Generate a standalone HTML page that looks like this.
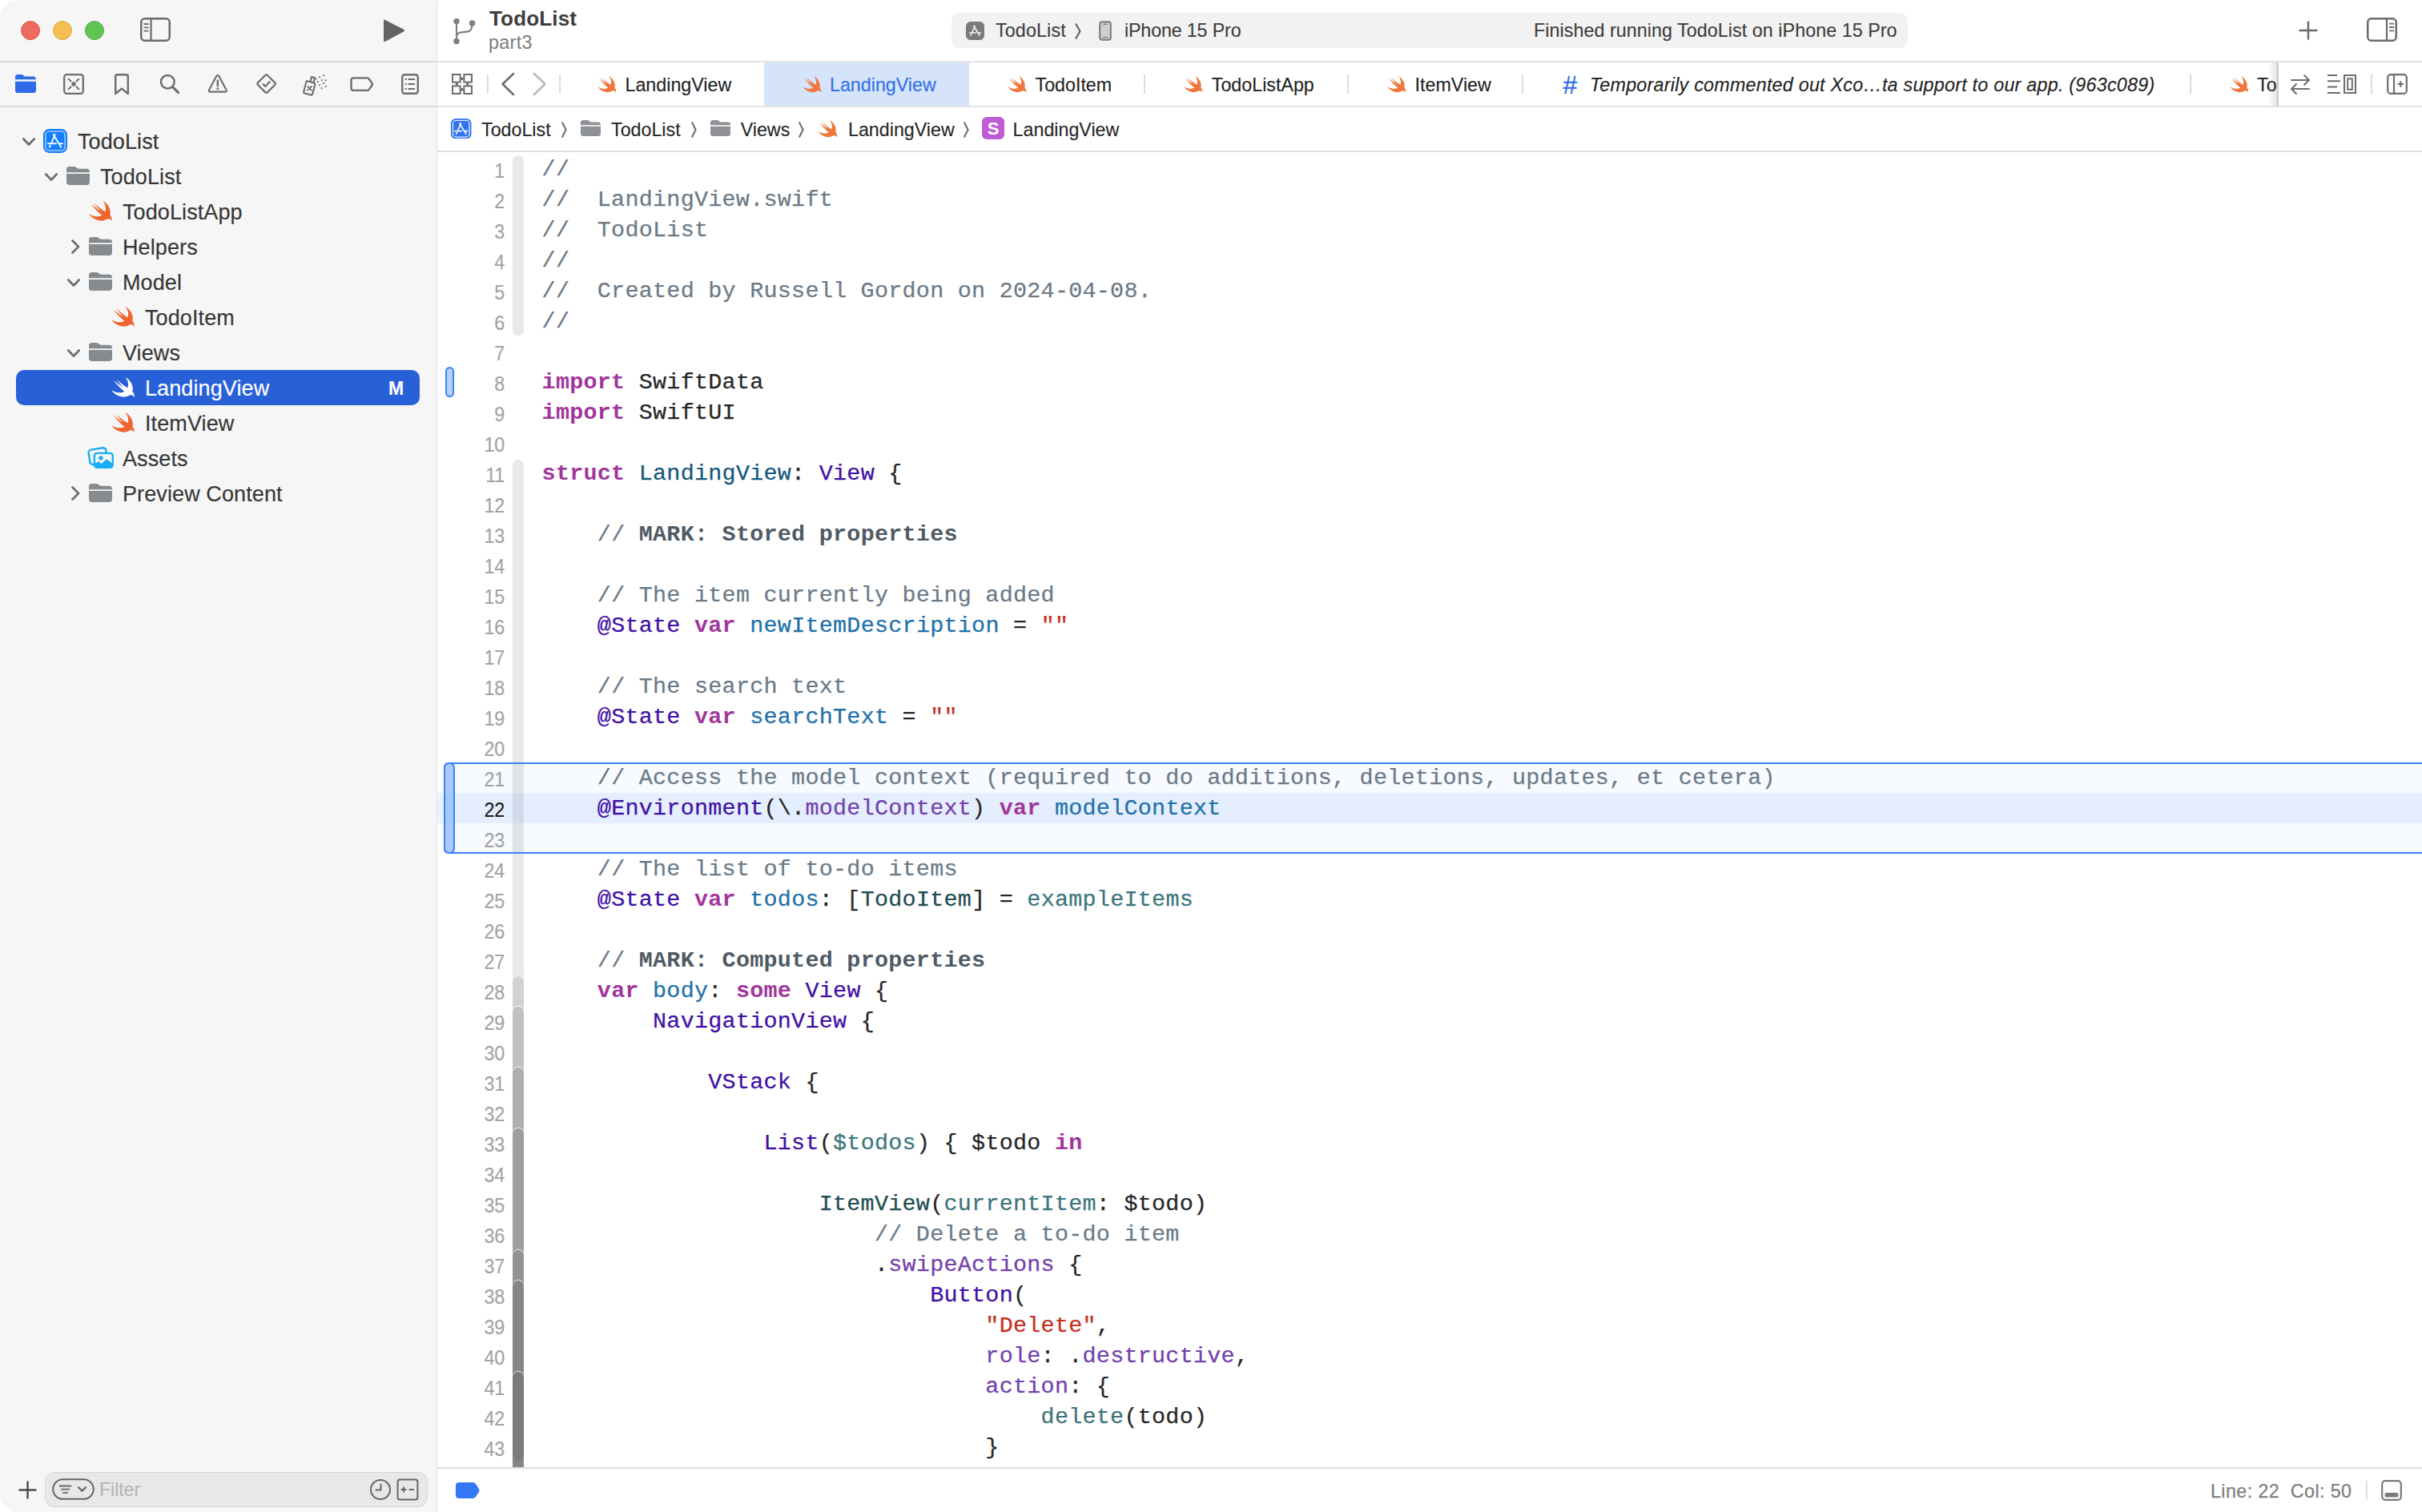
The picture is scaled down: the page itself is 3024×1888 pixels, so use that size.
<!DOCTYPE html>
<html><head><meta charset="utf-8"><title>TodoList — LandingView.swift</title>
<style>
*{box-sizing:border-box;margin:0;padding:0}
html,body{width:3024px;height:1888px;background:#fff;overflow:hidden}
body{font-family:"Liberation Sans",sans-serif;color:#333;position:relative}
.a{position:absolute;display:block}
.t{position:absolute;white-space:pre;line-height:1}
#side{position:absolute;left:0;top:0;width:546px;height:1888px;background:#f6f6f6;border-radius:21px 0 0 21px;box-shadow:inset 0 1px 0 #fbfbfb;border-right:1px solid #e2e2e2}
.hl{position:absolute;height:2px;background:#dedede}
.row{position:absolute;left:0;width:544px;height:44px}
.rt{position:absolute;top:0;height:44px;line-height:47px;font-size:27px;letter-spacing:.1px;-webkit-text-stroke:.15px;color:#363636;white-space:pre}
.tab{position:absolute;top:78px;height:54px;line-height:56px;font-size:23.25px;letter-spacing:0;-webkit-text-stroke:.12px;color:#222;white-space:pre}
.jb{position:absolute;top:134px;height:54px;line-height:57px;font-size:23.25px;letter-spacing:0;-webkit-text-stroke:.12px;color:#262626;white-space:pre}
.sep{position:absolute;width:2px;background:#dcdcdc}
#code{position:absolute;left:546px;top:190px;width:2478px;height:1642px;overflow:hidden;background:#fff}
.ln{position:absolute;left:0;width:84.3px;height:38px;line-height:40px;text-align:right;font-family:"Liberation Sans",sans-serif;font-size:26.6px;color:#a3a3a3;letter-spacing:0;-webkit-text-stroke:.2px;transform:scaleX(.875);transform-origin:100% 50%}
.cl{position:absolute;left:130.6px;height:38px;line-height:38.8px;font-family:"Liberation Mono",monospace;font-size:28.4px;letter-spacing:.268px;-webkit-text-stroke:.25px;white-space:pre;color:#262626}
.c{color:#6b7a87}.k{color:#a2359c;font-weight:bold;-webkit-text-stroke:0}.m{color:#4f5a65;font-weight:bold;-webkit-text-stroke:0}
.s{color:#c5301f}.td{color:#15577f}.od{color:#2071a9}.oc{color:#4010a4}.op{color:#7340ad}.pc{color:#214c50}.pf{color:#3d757c}
</style></head><body>
<div id="side"></div><div class="hl" style="left:0;top:76px;width:545px;background:#d9d9d9"></div><div class="hl" style="left:0;top:132px;width:545px;background:#d9d9d9"></div><div class="hl" style="left:546px;top:76px;width:2478px;background:#e3e3e3"></div><div class="hl" style="left:546px;top:132px;width:2478px;background:#e3e3e3"></div><div class="hl" style="left:546px;top:188px;width:2478px"></div><div class="hl" style="left:546px;top:1832px;width:2478px"></div><div class="a" style="left:26px;top:26px;width:24px;height:24px;border-radius:50%;background:#ed6a5f;border:1px solid #d8584d"></div><div class="a" style="left:66px;top:26px;width:24px;height:24px;border-radius:50%;background:#f5be4f;border:1px solid #dca93f"></div><div class="a" style="left:106px;top:26px;width:24px;height:24px;border-radius:50%;background:#61c554;border:1px solid #51ad45"></div><svg class="a" style="left:174px;top:21px" width="40" height="32" viewBox="0 0 40 32"><g fill="none" stroke="#6b6b6b" stroke-width="2.5"><rect x="2.25" y="2.25" width="35.5" height="27.5" rx="4.5"/><path d="M14.5 2.5V29.5" stroke-width="2.2"/></g><g stroke="#6b6b6b" stroke-width="1.8" stroke-linecap="round"><path d="M6.3 9H10.8M6.3 13.3H10.8M6.3 17.6H10.8"/></g></svg><svg class="a" style="left:475px;top:21.6px" width="34" height="33" viewBox="0 0 34 36" preserveAspectRatio="none"><path d="M4 4.5Q4 2 6.2 3.2L29 16.2Q31 17.6 29 19L6.2 32.4Q4 33.6 4 31Z" fill="#636363"/></svg><svg class="a" style="left:19px;top:93px" width="26" height="23" viewBox="0 0 27 23" preserveAspectRatio="none"><path fill="#2f6be6" d="M0 3.4Q0 0 3.4 0H7.8Q9.4 0 10.5 1.1L11.2 1.8Q11.9 2.5 13 2.5H23.4Q26.6 2.5 26.8 5.6V6.3H0Z"/><path fill="#2f6be6" d="M0 8.7H27V19.4Q27 23 23.4 23H3.6Q0 23 0 19.4Z"/></svg><svg class="a" style="left:78px;top:91px" width="28" height="28" viewBox="0 0 28 28"><g fill="none" stroke="#6e6e6e" stroke-width="2.3" stroke-linecap="round"><rect x="2.2" y="2.2" width="23.6" height="23.6" rx="3"/><path d="M7.7 7.7L10.6 10.6M20.3 7.7L17.4 10.6M7.7 20.3L10.6 17.4M20.3 20.3L17.4 17.4" stroke-width="2"/></g><circle cx="14" cy="14" r="2.7" fill="#6e6e6e"/></svg><svg class="a" style="left:141px;top:91px" width="22" height="29" viewBox="0 0 22 29"><path d="M3.2 4.4Q3.2 2.3 5.3 2.3H16.7Q18.8 2.3 18.8 4.4V26L11 19.6L3.2 26Z" fill="none" stroke="#6e6e6e" stroke-width="2.4" stroke-linejoin="round"/></svg><svg class="a" style="left:198px;top:91px" width="28" height="28" viewBox="0 0 28 28"><g fill="none" stroke="#6e6e6e" stroke-width="2.5" stroke-linecap="round"><circle cx="11.3" cy="11.3" r="8.3"/><path d="M17.6 17.6L24.6 24.6" stroke-width="3"/></g></svg><svg class="a" style="left:259.3px;top:91.6px" width="25.6" height="25.6" viewBox="0 0 28 27" preserveAspectRatio="none"><path d="M12.3 3.3Q14 0.6 15.7 3.3L25.8 21.3Q27 23.8 24.3 23.8H3.7Q1 23.8 2.2 21.3Z" fill="none" stroke="#6e6e6e" stroke-width="2.3" stroke-linejoin="round"/><path d="M14 9.3V16" stroke="#6e6e6e" stroke-width="2.6" stroke-linecap="round"/><circle cx="14" cy="19.8" r="1.6" fill="#6e6e6e"/></svg><svg class="a" style="left:318.5px;top:91.4px" width="27.2" height="27.2" viewBox="0 0 30 30"><g fill="none" stroke="#6e6e6e" stroke-width="2.4" stroke-linejoin="round" stroke-linecap="round"><path d="M13.4 3.4Q15 1.8 16.6 3.4L26.6 13.4Q28.2 15 26.6 16.6L16.6 26.6Q15 28.2 13.4 26.6L3.4 16.6Q1.8 15 3.4 13.4Z"/><path d="M10.6 15.6L13.8 18.6L19.6 12.2"/></g></svg><svg class="a" style="left:376.5px;top:90.5px" width="34" height="30" viewBox="0 0 34 30"><g fill="none" stroke="#6e6e6e" stroke-width="2.1" stroke-linejoin="round" stroke-linecap="round"><path d="M6.6 10.2L14.8 12.4Q16.6 13 16.2 14.8L13.2 26.2Q12.6 28 10.8 27.6L3.6 25.6Q1.8 25 2.3 23.2L5.2 11.8Q5.6 10 6.6 10.2Z"/><path d="M10.6 10.8L11.9 5L15.9 6L14.6 12"/><path d="M7.2 16.8L11.8 21.6M11.9 17L7 21.6" stroke-width="1.8"/></g><g fill="#6e6e6e"><rect x="26.2" y="2.2" width="1.9" height="1.9"/><rect x="21.1" y="4.2" width="1.9" height="1.9"/><rect x="16.5" y="6.3" width="1.9" height="1.9"/><rect x="23.9" y="8.2" width="1.9" height="1.9"/><rect x="28.8" y="8.4" width="1.9" height="1.9"/><rect x="18.8" y="10" width="1.9" height="1.9"/><rect x="26.2" y="12" width="1.9" height="1.9"/><rect x="21.1" y="14.2" width="1.9" height="1.9"/><rect x="28.8" y="16" width="1.9" height="1.9"/><rect x="23.7" y="18.2" width="1.9" height="1.9"/></g></svg><svg class="a" style="left:436.8px;top:95.8px" width="29.4" height="18.4" viewBox="0 0 31 20" preserveAspectRatio="none"><path d="M4.4 1.6H22.4Q24.2 1.6 25.2 3L29 8.6Q29.8 10 29 11.4L25.2 17Q24.2 18.4 22.4 18.4H4.4Q1.6 18.4 1.6 15.6V4.4Q1.6 1.6 4.4 1.6Z" fill="none" stroke="#6e6e6e" stroke-width="2.5" stroke-linejoin="round"/></svg><svg class="a" style="left:500px;top:91px" width="24" height="28" viewBox="0 0 24 28"><rect x="2.2" y="2.2" width="19.6" height="23.6" rx="3" fill="none" stroke="#6e6e6e" stroke-width="2.4"/><g stroke="#6e6e6e" stroke-width="2" ><path d="M9.4 8H18M9.4 14H18M9.4 20H18"/><path d="M5.6 8H7.6M5.6 14H7.6M5.6 20H7.6"/></g></svg><svg class="a" style="left:26px;top:170px" width="20" height="14" viewBox="0 0 20 14"><path d="M3.3 3.6L10 10.5L16.7 3.6" fill="none" stroke="#6e6e6e" stroke-width="2.8" stroke-linecap="round" stroke-linejoin="round"/></svg><svg class="a" style="left:54px;top:161px" width="30" height="30" viewBox="0 0 30 30"><rect x="0" y="0" width="30" height="30" rx="7.4" fill="#167efb"/><rect x="2.9" y="2.9" width="24.2" height="24.2" rx="4.6" fill="none" stroke="#a4ccfd" stroke-width="1.5"/><g stroke="#fff" stroke-width="2" stroke-linecap="round" fill="none" opacity=".93"><path d="M14.6 6.9L10.3 17.4"/><path d="M12.7 7.2L22.2 22.6"/><path d="M6 18.3H16"/><path d="M20.3 18.3H24.1"/><path d="M8.9 20.6L7.9 22.6"/></g></svg><div class="rt" style="left:97px;top:154px;">TodoList</div><svg class="a" style="left:54px;top:214px" width="20" height="14" viewBox="0 0 20 14"><path d="M3.3 3.6L10 10.5L16.7 3.6" fill="none" stroke="#6e6e6e" stroke-width="2.8" stroke-linecap="round" stroke-linejoin="round"/></svg><svg class="a" style="left:83px;top:208px" width="29" height="23" viewBox="0 0 25 20" preserveAspectRatio="none"><path fill="#868b90" d="M0 3.2Q0 0 3.2 0H8.2Q9.6 0 10.6 1L11.4 1.8Q12 2.4 13 2.4H21.8Q25 2.4 25 5.6V6.2H0Z"/><path fill="#868b90" d="M0 7.8H25V16.8Q25 20 21.8 20H3.2Q0 20 0 16.8Z"/></svg><div class="rt" style="left:125px;top:198px;">TodoList</div><svg class="a" style="left:111px;top:251px" width="29" height="25" viewBox="2.4 3.4 18.3 16.4" preserveAspectRatio="none"><path fill="#f0652f" d="M13.543 3.41c4.114 2.47 6.545 7.162 5.549 11.131-.024.093-.05.181-.076.272l.002.001c2.062 2.538 1.5 5.258 1.236 4.745-1.072-2.086-3.066-1.568-4.088-1.043a6.803 6.803 0 0 1-.281.158l-.02.012-.002.002c-2.115 1.123-4.957 1.205-7.812-.022a12.568 12.568 0 0 1-5.64-4.838c.649.48 1.35.902 2.097 1.252 3.019 1.414 6.051 1.311 8.197-.002C9.651 12.73 7.101 9.67 5.146 7.191a10.628 10.628 0 0 1-1.005-1.384c2.34 2.142 6.038 4.83 7.365 5.576C8.69 8.408 6.208 4.743 6.324 4.86c4.436 4.47 8.528 6.996 8.528 6.996.154.085.27.154.36.213.085-.215.16-.437.224-.668.708-2.588-.09-5.548-1.893-7.992z"/></svg><div class="rt" style="left:153px;top:242px;">TodoListApp</div><svg class="a" style="left:87px;top:298px" width="14" height="20" viewBox="0 0 14 20"><path d="M3.5 2.5L11 10L3.5 17.5" fill="none" stroke="#6e6e6e" stroke-width="2.8" stroke-linecap="round" stroke-linejoin="round"/></svg><svg class="a" style="left:111px;top:296px" width="29" height="23" viewBox="0 0 25 20" preserveAspectRatio="none"><path fill="#868b90" d="M0 3.2Q0 0 3.2 0H8.2Q9.6 0 10.6 1L11.4 1.8Q12 2.4 13 2.4H21.8Q25 2.4 25 5.6V6.2H0Z"/><path fill="#868b90" d="M0 7.8H25V16.8Q25 20 21.8 20H3.2Q0 20 0 16.8Z"/></svg><div class="rt" style="left:153px;top:286px;">Helpers</div><svg class="a" style="left:82px;top:346px" width="20" height="14" viewBox="0 0 20 14"><path d="M3.3 3.6L10 10.5L16.7 3.6" fill="none" stroke="#6e6e6e" stroke-width="2.8" stroke-linecap="round" stroke-linejoin="round"/></svg><svg class="a" style="left:111px;top:340px" width="29" height="23" viewBox="0 0 25 20" preserveAspectRatio="none"><path fill="#868b90" d="M0 3.2Q0 0 3.2 0H8.2Q9.6 0 10.6 1L11.4 1.8Q12 2.4 13 2.4H21.8Q25 2.4 25 5.6V6.2H0Z"/><path fill="#868b90" d="M0 7.8H25V16.8Q25 20 21.8 20H3.2Q0 20 0 16.8Z"/></svg><div class="rt" style="left:153px;top:330px;">Model</div><svg class="a" style="left:139px;top:383px" width="29" height="25" viewBox="2.4 3.4 18.3 16.4" preserveAspectRatio="none"><path fill="#f0652f" d="M13.543 3.41c4.114 2.47 6.545 7.162 5.549 11.131-.024.093-.05.181-.076.272l.002.001c2.062 2.538 1.5 5.258 1.236 4.745-1.072-2.086-3.066-1.568-4.088-1.043a6.803 6.803 0 0 1-.281.158l-.02.012-.002.002c-2.115 1.123-4.957 1.205-7.812-.022a12.568 12.568 0 0 1-5.64-4.838c.649.48 1.35.902 2.097 1.252 3.019 1.414 6.051 1.311 8.197-.002C9.651 12.73 7.101 9.67 5.146 7.191a10.628 10.628 0 0 1-1.005-1.384c2.34 2.142 6.038 4.83 7.365 5.576C8.69 8.408 6.208 4.743 6.324 4.86c4.436 4.47 8.528 6.996 8.528 6.996.154.085.27.154.36.213.085-.215.16-.437.224-.668.708-2.588-.09-5.548-1.893-7.992z"/></svg><div class="rt" style="left:181px;top:374px;">TodoItem</div><svg class="a" style="left:82px;top:434px" width="20" height="14" viewBox="0 0 20 14"><path d="M3.3 3.6L10 10.5L16.7 3.6" fill="none" stroke="#6e6e6e" stroke-width="2.8" stroke-linecap="round" stroke-linejoin="round"/></svg><svg class="a" style="left:111px;top:428px" width="29" height="23" viewBox="0 0 25 20" preserveAspectRatio="none"><path fill="#868b90" d="M0 3.2Q0 0 3.2 0H8.2Q9.6 0 10.6 1L11.4 1.8Q12 2.4 13 2.4H21.8Q25 2.4 25 5.6V6.2H0Z"/><path fill="#868b90" d="M0 7.8H25V16.8Q25 20 21.8 20H3.2Q0 20 0 16.8Z"/></svg><div class="rt" style="left:153px;top:418px;">Views</div><div class="a" style="left:20px;top:462px;width:504px;height:44px;border-radius:10px;background:#2860d8"></div><svg class="a" style="left:139px;top:471px" width="29" height="25" viewBox="2.4 3.4 18.3 16.4" preserveAspectRatio="none"><path fill="#fff" d="M13.543 3.41c4.114 2.47 6.545 7.162 5.549 11.131-.024.093-.05.181-.076.272l.002.001c2.062 2.538 1.5 5.258 1.236 4.745-1.072-2.086-3.066-1.568-4.088-1.043a6.803 6.803 0 0 1-.281.158l-.02.012-.002.002c-2.115 1.123-4.957 1.205-7.812-.022a12.568 12.568 0 0 1-5.64-4.838c.649.48 1.35.902 2.097 1.252 3.019 1.414 6.051 1.311 8.197-.002C9.651 12.73 7.101 9.67 5.146 7.191a10.628 10.628 0 0 1-1.005-1.384c2.34 2.142 6.038 4.83 7.365 5.576C8.69 8.408 6.208 4.743 6.324 4.86c4.436 4.47 8.528 6.996 8.528 6.996.154.085.27.154.36.213.085-.215.16-.437.224-.668.708-2.588-.09-5.548-1.893-7.992z"/></svg><div class="rt" style="left:181px;top:462px;color:#fff;">LandingView</div><div class="rt" style="left:485px;top:462px;color:#fff;font-weight:bold;font-size:23px;letter-spacing:0">M</div><svg class="a" style="left:139px;top:515px" width="29" height="25" viewBox="2.4 3.4 18.3 16.4" preserveAspectRatio="none"><path fill="#f0652f" d="M13.543 3.41c4.114 2.47 6.545 7.162 5.549 11.131-.024.093-.05.181-.076.272l.002.001c2.062 2.538 1.5 5.258 1.236 4.745-1.072-2.086-3.066-1.568-4.088-1.043a6.803 6.803 0 0 1-.281.158l-.02.012-.002.002c-2.115 1.123-4.957 1.205-7.812-.022a12.568 12.568 0 0 1-5.64-4.838c.649.48 1.35.902 2.097 1.252 3.019 1.414 6.051 1.311 8.197-.002C9.651 12.73 7.101 9.67 5.146 7.191a10.628 10.628 0 0 1-1.005-1.384c2.34 2.142 6.038 4.83 7.365 5.576C8.69 8.408 6.208 4.743 6.324 4.86c4.436 4.47 8.528 6.996 8.528 6.996.154.085.27.154.36.213.085-.215.16-.437.224-.668.708-2.588-.09-5.548-1.893-7.992z"/></svg><div class="rt" style="left:181px;top:506px;">ItemView</div><svg class="a" style="left:107px;top:555px" width="36" height="32" viewBox="0 0 36 32"><rect x="4.3" y="5.3" width="22" height="18.6" rx="3.6" transform="rotate(-9 15.3 14.6)" fill="none" stroke="#1badf8" stroke-width="2.4"/><rect x="10.9" y="10.9" width="22.9" height="17.9" rx="3.4" fill="#f6f6f6" stroke="#1badf8" stroke-width="2.4"/><circle cx="18.9" cy="17" r="2.8" fill="#1badf8"/><path d="M10.9 24.6L15.2 21.6Q16.2 21 17.2 21.7L19.6 24L24.6 19.4Q26.3 18.2 28 19.4L33.8 24V25.4Q33.8 28.8 30.4 28.8H14.3Q10.9 28.8 10.9 25.4Z" fill="#1badf8"/></svg><div class="rt" style="left:153px;top:550px;">Assets</div><svg class="a" style="left:87px;top:606px" width="14" height="20" viewBox="0 0 14 20"><path d="M3.5 2.5L11 10L3.5 17.5" fill="none" stroke="#6e6e6e" stroke-width="2.8" stroke-linecap="round" stroke-linejoin="round"/></svg><svg class="a" style="left:111px;top:604px" width="29" height="23" viewBox="0 0 25 20" preserveAspectRatio="none"><path fill="#868b90" d="M0 3.2Q0 0 3.2 0H8.2Q9.6 0 10.6 1L11.4 1.8Q12 2.4 13 2.4H21.8Q25 2.4 25 5.6V6.2H0Z"/><path fill="#868b90" d="M0 7.8H25V16.8Q25 20 21.8 20H3.2Q0 20 0 16.8Z"/></svg><div class="rt" style="left:153px;top:594px;">Preview Content</div><svg class="a" style="left:23px;top:1849px" width="23" height="23" viewBox="0 0 23 23"><path d="M11.5 1.5V21.5M1.5 11.5H21.5" stroke="#4a4a4a" stroke-width="2.4" stroke-linecap="round"/></svg><div class="a" style="left:56px;top:1838px;width:478px;height:44px;border-radius:12px;background:#e8e8e8;border:1px solid #d6d6d6"></div><svg class="a" style="left:65px;top:1846px" width="53" height="27" viewBox="0 0 53 27"><rect x="1.2" y="1.2" width="50.6" height="24.6" rx="12.3" fill="none" stroke="#666" stroke-width="2"/><path d="M9.5 9.5H23.5M11.8 13.7H21.2M14 17.9H19" stroke="#666" stroke-width="1.8" stroke-linecap="round"/><path d="M33 11.2L37.5 15.6L42 11.2" fill="none" stroke="#666" stroke-width="2.2" stroke-linecap="round" stroke-linejoin="round"/></svg><div class="t" style="left:124px;top:1849px;font-size:23.25px;letter-spacing:-.1px;color:#b3b3b3">Filter</div><svg class="a" style="left:461px;top:1846px" width="28" height="28" viewBox="0 0 28 28"><circle cx="14" cy="14" r="12" fill="none" stroke="#666" stroke-width="2"/><path d="M14.5 7.5V14.5H8.5" fill="none" stroke="#666" stroke-width="2" stroke-linecap="round" stroke-linejoin="round"/></svg><svg class="a" style="left:495px;top:1846px" width="28" height="28" viewBox="0 0 28 28"><rect x="1.6" y="1.6" width="24.8" height="24.8" rx="2.6" fill="none" stroke="#666" stroke-width="2"/><path d="M5.6 14H12.4M9 10.6V17.4M15.8 14H22" stroke="#666" stroke-width="2" /></svg><svg class="a" style="left:563px;top:21px" width="32" height="36" viewBox="0 0 32 36"><g fill="none" stroke="#7e7e7e" stroke-width="2.1" stroke-linecap="round"><path d="M7 7V29"/><path d="M26 9.5V12Q26 18 20 18.6L13 19.4Q7 20.2 7 25"/></g><circle cx="7" cy="5.6" r="3.7" fill="#7e7e7e"/><circle cx="7" cy="30.4" r="3.7" fill="#7e7e7e"/><circle cx="26.6" cy="8" r="3.7" fill="#7e7e7e"/></svg><div class="t" style="left:611px;top:9.5px;font-size:26px;font-weight:bold;letter-spacing:.17px;color:#3d3d3d">TodoList</div><div class="t" style="left:610px;top:42px;font-size:23.25px;letter-spacing:.38px;color:#7d7d7d">part3</div><div class="a" style="left:1188px;top:16px;width:1194px;height:44px;border-radius:11px;background:#f2f2f2"></div><svg class="a" style="left:1206px;top:27px" width="23" height="23" viewBox="0 0 30 30"><rect x="0" y="0" width="30" height="30" rx="7.4" fill="#7a7a7a"/><g stroke="#fff" stroke-width="2" stroke-linecap="round" fill="none" opacity=".93"><path d="M14.6 6.9L10.3 17.4"/><path d="M12.7 7.2L22.2 22.6"/><path d="M6 18.3H16"/><path d="M20.3 18.3H24.1"/><path d="M8.9 20.6L7.9 22.6"/></g></svg><div class="t" style="left:1243px;top:27px;font-size:23.25px;letter-spacing:.15px;-webkit-text-stroke:.12px;color:#3c3c3c">TodoList</div><svg class="a" style="left:1341px;top:28px" width="10" height="22" viewBox="0 0 10 22"><path d="M2 1.5L7.5 11L2 20.5" fill="none" stroke="#5a5a5a" stroke-width="2"/></svg><svg class="a" style="left:1372px;top:26px" width="16" height="25" viewBox="0 0 16 25"><rect x="1.2" y="1.2" width="13.6" height="22.6" rx="3" fill="#cfcfcf" stroke="#7a7a7a" stroke-width="2"/><path d="M5.5 4.2H10.5M5 20.6H11" stroke="#7a7a7a" stroke-width="1.4"/></svg><div class="t" style="left:1404px;top:27px;font-size:23.25px;letter-spacing:-.15px;-webkit-text-stroke:.12px;color:#3c3c3c">iPhone 15 Pro</div><div class="t" style="left:1915px;top:27px;font-size:23.25px;letter-spacing:.07px;-webkit-text-stroke:.12px;color:#3c3c3c">Finished running TodoList on iPhone 15 Pro</div><svg class="a" style="left:2870px;top:26px" width="24" height="24" viewBox="0 0 24 24"><path d="M12 1.5V22.5M1.5 12H22.5" stroke="#6a6a6a" stroke-width="2.4" stroke-linecap="round"/></svg><svg class="a" style="left:2954px;top:21px" width="40" height="32" viewBox="0 0 40 32"><g fill="none" stroke="#6b6b6b" stroke-width="2.5"><rect x="2.25" y="2.25" width="35.5" height="27.5" rx="4.5"/><path d="M26 2.5V29.5" stroke-width="2.2"/></g><g stroke="#6b6b6b" stroke-width="1.8" stroke-linecap="round"><path d="M29.8 8.6H34.4M29.8 13H34.4M29.8 17.4H34.4"/></g></svg><svg class="a" style="left:563px;top:91px" width="28" height="28" viewBox="0 0 28 28"><g fill="none" stroke="#6e6e6e" stroke-width="2"><rect x="2" y="2" width="9.6" height="9.6"/><rect x="16.4" y="2" width="9.6" height="9.6"/><rect x="2" y="16.4" width="9.6" height="9.6"/><rect x="16.4" y="16.4" width="9.6" height="9.6"/><path d="M11.6 6.8H16.4M6.8 11.6V16.4M21.2 11.6V16.4M11.6 21.2H16.4M14 6.8V9M19 14H21.2M14 21.2V19M6.8 14H9"/></g></svg><div class="sep" style="left:608px;top:93px;height:24px"></div><svg class="a" style="left:624px;top:89px" width="20" height="32" viewBox="0 0 20 32"><path d="M17 3L3.5 16L17 29" fill="none" stroke="#6e6e6e" stroke-width="2.6" stroke-linecap="round" stroke-linejoin="round"/></svg><svg class="a" style="left:664px;top:89px" width="20" height="32" viewBox="0 0 20 32"><path d="M3 3L16.5 16L3 29" fill="none" stroke="#b9b9b9" stroke-width="2.6" stroke-linecap="round" stroke-linejoin="round"/></svg><div class="sep" style="left:698px;top:93px;height:24px"></div><div class="a" style="left:954px;top:78px;width:256px;height:54px;background:#d6e4fb"></div><svg class="a" style="left:746px;top:95px" width="23.5" height="20.5" viewBox="2.4 3.4 18.3 16.4" preserveAspectRatio="none"><path fill="#f0783f" d="M13.543 3.41c4.114 2.47 6.545 7.162 5.549 11.131-.024.093-.05.181-.076.272l.002.001c2.062 2.538 1.5 5.258 1.236 4.745-1.072-2.086-3.066-1.568-4.088-1.043a6.803 6.803 0 0 1-.281.158l-.02.012-.002.002c-2.115 1.123-4.957 1.205-7.812-.022a12.568 12.568 0 0 1-5.64-4.838c.649.48 1.35.902 2.097 1.252 3.019 1.414 6.051 1.311 8.197-.002C9.651 12.73 7.101 9.67 5.146 7.191a10.628 10.628 0 0 1-1.005-1.384c2.34 2.142 6.038 4.83 7.365 5.576C8.69 8.408 6.208 4.743 6.324 4.86c4.436 4.47 8.528 6.996 8.528 6.996.154.085.27.154.36.213.085-.215.16-.437.224-.668.708-2.588-.09-5.548-1.893-7.992z"/></svg><div class="tab" style="left:780.5px;color:#222">LandingView</div><svg class="a" style="left:1002px;top:95px" width="23.5" height="20.5" viewBox="2.4 3.4 18.3 16.4" preserveAspectRatio="none"><path fill="#f0783f" d="M13.543 3.41c4.114 2.47 6.545 7.162 5.549 11.131-.024.093-.05.181-.076.272l.002.001c2.062 2.538 1.5 5.258 1.236 4.745-1.072-2.086-3.066-1.568-4.088-1.043a6.803 6.803 0 0 1-.281.158l-.02.012-.002.002c-2.115 1.123-4.957 1.205-7.812-.022a12.568 12.568 0 0 1-5.64-4.838c.649.48 1.35.902 2.097 1.252 3.019 1.414 6.051 1.311 8.197-.002C9.651 12.73 7.101 9.67 5.146 7.191a10.628 10.628 0 0 1-1.005-1.384c2.34 2.142 6.038 4.83 7.365 5.576C8.69 8.408 6.208 4.743 6.324 4.86c4.436 4.47 8.528 6.996 8.528 6.996.154.085.27.154.36.213.085-.215.16-.437.224-.668.708-2.588-.09-5.548-1.893-7.992z"/></svg><div class="tab" style="left:1036px;color:#2f6fe4">LandingView</div><svg class="a" style="left:1258px;top:95px" width="23.5" height="20.5" viewBox="2.4 3.4 18.3 16.4" preserveAspectRatio="none"><path fill="#f0783f" d="M13.543 3.41c4.114 2.47 6.545 7.162 5.549 11.131-.024.093-.05.181-.076.272l.002.001c2.062 2.538 1.5 5.258 1.236 4.745-1.072-2.086-3.066-1.568-4.088-1.043a6.803 6.803 0 0 1-.281.158l-.02.012-.002.002c-2.115 1.123-4.957 1.205-7.812-.022a12.568 12.568 0 0 1-5.64-4.838c.649.48 1.35.902 2.097 1.252 3.019 1.414 6.051 1.311 8.197-.002C9.651 12.73 7.101 9.67 5.146 7.191a10.628 10.628 0 0 1-1.005-1.384c2.34 2.142 6.038 4.83 7.365 5.576C8.69 8.408 6.208 4.743 6.324 4.86c4.436 4.47 8.528 6.996 8.528 6.996.154.085.27.154.36.213.085-.215.16-.437.224-.668.708-2.588-.09-5.548-1.893-7.992z"/></svg><div class="tab" style="left:1292.5px;color:#222">TodoItem</div><svg class="a" style="left:1478px;top:95px" width="23.5" height="20.5" viewBox="2.4 3.4 18.3 16.4" preserveAspectRatio="none"><path fill="#f0783f" d="M13.543 3.41c4.114 2.47 6.545 7.162 5.549 11.131-.024.093-.05.181-.076.272l.002.001c2.062 2.538 1.5 5.258 1.236 4.745-1.072-2.086-3.066-1.568-4.088-1.043a6.803 6.803 0 0 1-.281.158l-.02.012-.002.002c-2.115 1.123-4.957 1.205-7.812-.022a12.568 12.568 0 0 1-5.64-4.838c.649.48 1.35.902 2.097 1.252 3.019 1.414 6.051 1.311 8.197-.002C9.651 12.73 7.101 9.67 5.146 7.191a10.628 10.628 0 0 1-1.005-1.384c2.34 2.142 6.038 4.83 7.365 5.576C8.69 8.408 6.208 4.743 6.324 4.86c4.436 4.47 8.528 6.996 8.528 6.996.154.085.27.154.36.213.085-.215.16-.437.224-.668.708-2.588-.09-5.548-1.893-7.992z"/></svg><div class="tab" style="left:1512.8px;color:#222">TodoListApp</div><svg class="a" style="left:1732px;top:95px" width="23.5" height="20.5" viewBox="2.4 3.4 18.3 16.4" preserveAspectRatio="none"><path fill="#f0783f" d="M13.543 3.41c4.114 2.47 6.545 7.162 5.549 11.131-.024.093-.05.181-.076.272l.002.001c2.062 2.538 1.5 5.258 1.236 4.745-1.072-2.086-3.066-1.568-4.088-1.043a6.803 6.803 0 0 1-.281.158l-.02.012-.002.002c-2.115 1.123-4.957 1.205-7.812-.022a12.568 12.568 0 0 1-5.64-4.838c.649.48 1.35.902 2.097 1.252 3.019 1.414 6.051 1.311 8.197-.002C9.651 12.73 7.101 9.67 5.146 7.191a10.628 10.628 0 0 1-1.005-1.384c2.34 2.142 6.038 4.83 7.365 5.576C8.69 8.408 6.208 4.743 6.324 4.86c4.436 4.47 8.528 6.996 8.528 6.996.154.085.27.154.36.213.085-.215.16-.437.224-.668.708-2.588-.09-5.548-1.893-7.992z"/></svg><div class="tab" style="left:1766.6px;color:#222">ItemView</div><div class="sep" style="left:1428px;top:93px;height:24px"></div><div class="sep" style="left:1682px;top:93px;height:24px"></div><div class="sep" style="left:1900px;top:93px;height:24px"></div><div class="sep" style="left:2734px;top:93px;height:24px"></div><div class="tab" style="left:1951px;color:#2f6fe4;font-size:32px;font-style:italic;line-height:56px;-webkit-text-stroke:.3px">#</div><div class="tab" style="left:1985px;font-style:italic;letter-spacing:.26px">Temporarily commented out Xco…ta support to our app. (963c089)</div><svg class="a" style="left:2783.7px;top:95px" width="23.5" height="20.5" viewBox="2.4 3.4 18.3 16.4" preserveAspectRatio="none"><path fill="#f0783f" d="M13.543 3.41c4.114 2.47 6.545 7.162 5.549 11.131-.024.093-.05.181-.076.272l.002.001c2.062 2.538 1.5 5.258 1.236 4.745-1.072-2.086-3.066-1.568-4.088-1.043a6.803 6.803 0 0 1-.281.158l-.02.012-.002.002c-2.115 1.123-4.957 1.205-7.812-.022a12.568 12.568 0 0 1-5.64-4.838c.649.48 1.35.902 2.097 1.252 3.019 1.414 6.051 1.311 8.197-.002C9.651 12.73 7.101 9.67 5.146 7.191a10.628 10.628 0 0 1-1.005-1.384c2.34 2.142 6.038 4.83 7.365 5.576C8.69 8.408 6.208 4.743 6.324 4.86c4.436 4.47 8.528 6.996 8.528 6.996.154.085.27.154.36.213.085-.215.16-.437.224-.668.708-2.588-.09-5.548-1.893-7.992z"/></svg><div class="tab" style="left:2818px">TodoList</div><div class="a" style="left:2832px;top:78px;width:12px;height:54px;background:linear-gradient(90deg,rgba(255,255,255,0),rgba(120,120,120,.22))"></div><div class="a" style="left:2843px;top:78px;width:181px;height:54px;background:#fff;border-left:2px solid #c9c9c9"></div><svg class="a" style="left:2858px;top:91px" width="28" height="28" viewBox="0 0 28 28"><g fill="none" stroke="#6e6e6e" stroke-width="2" stroke-linecap="round" stroke-linejoin="round"><path d="M3 9H25M19 3L25 9L19 15"/><path d="M25 20H3M9 14L3 20L9 26"/></g></svg><svg class="a" style="left:2905px;top:91px" width="38" height="28" viewBox="0 0 38 28"><g fill="none" stroke="#6e6e6e" stroke-width="2"><path d="M1 3H13M1 10.3H17M1 17.6H13M1 25H17"/><rect x="22" y="3" width="14" height="22" /><rect x="26.2" y="7.2" width="5.6" height="13.6"/></g></svg><div class="sep" style="left:2960px;top:93px;height:24px"></div><svg class="a" style="left:2979px;top:91px" width="28" height="28" viewBox="0 0 28 28"><g fill="none" stroke="#6e6e6e" stroke-width="2.2"><rect x="2.2" y="2.2" width="23.6" height="23.6" rx="3.6"/><path d="M10 2.2V25.8M14.6 14H22M18.3 10.3V17.7"/></g></svg><svg class="a" style="left:563px;top:147.5px" width="25.5" height="25.5" viewBox="0 0 30 30"><rect x="0" y="0" width="30" height="30" rx="7.4" fill="#3273ec"/><rect x="2.9" y="2.9" width="24.2" height="24.2" rx="4.6" fill="none" stroke="#e6effe" stroke-width="1.5"/><g stroke="#fff" stroke-width="2" stroke-linecap="round" fill="none" opacity=".93"><path d="M14.6 6.9L10.3 17.4"/><path d="M12.7 7.2L22.2 22.6"/><path d="M6 18.3H16"/><path d="M20.3 18.3H24.1"/><path d="M8.9 20.6L7.9 22.6"/></g></svg><div class="jb" style="left:601px">TodoList</div><svg class="a" style="left:700px;top:151px" width="9" height="22" viewBox="0 0 9 22"><path d="M1.8 1.6L6.6 11L1.8 20.4" fill="none" stroke="#737373" stroke-width="2.2"/></svg><svg class="a" style="left:725px;top:150px" width="25" height="20" viewBox="0 0 25 20" preserveAspectRatio="none"><path fill="#8e9296" d="M0 3.2Q0 0 3.2 0H8.2Q9.6 0 10.6 1L11.4 1.8Q12 2.4 13 2.4H21.8Q25 2.4 25 5.6V6.2H0Z"/><path fill="#8e9296" d="M0 7.8H25V16.8Q25 20 21.8 20H3.2Q0 20 0 16.8Z"/></svg><div class="jb" style="left:763px">TodoList</div><svg class="a" style="left:862px;top:151px" width="9" height="22" viewBox="0 0 9 22"><path d="M1.8 1.6L6.6 11L1.8 20.4" fill="none" stroke="#737373" stroke-width="2.2"/></svg><svg class="a" style="left:887px;top:150px" width="25" height="20" viewBox="0 0 25 20" preserveAspectRatio="none"><path fill="#8e9296" d="M0 3.2Q0 0 3.2 0H8.2Q9.6 0 10.6 1L11.4 1.8Q12 2.4 13 2.4H21.8Q25 2.4 25 5.6V6.2H0Z"/><path fill="#8e9296" d="M0 7.8H25V16.8Q25 20 21.8 20H3.2Q0 20 0 16.8Z"/></svg><div class="jb" style="left:924.7px">Views</div><svg class="a" style="left:996px;top:151px" width="9" height="22" viewBox="0 0 9 22"><path d="M1.8 1.6L6.6 11L1.8 20.4" fill="none" stroke="#737373" stroke-width="2.2"/></svg><svg class="a" style="left:1021px;top:150px" width="24.5" height="21.5" viewBox="2.4 3.4 18.3 16.4" preserveAspectRatio="none"><path fill="#f0783f" d="M13.543 3.41c4.114 2.47 6.545 7.162 5.549 11.131-.024.093-.05.181-.076.272l.002.001c2.062 2.538 1.5 5.258 1.236 4.745-1.072-2.086-3.066-1.568-4.088-1.043a6.803 6.803 0 0 1-.281.158l-.02.012-.002.002c-2.115 1.123-4.957 1.205-7.812-.022a12.568 12.568 0 0 1-5.64-4.838c.649.48 1.35.902 2.097 1.252 3.019 1.414 6.051 1.311 8.197-.002C9.651 12.73 7.101 9.67 5.146 7.191a10.628 10.628 0 0 1-1.005-1.384c2.34 2.142 6.038 4.83 7.365 5.576C8.69 8.408 6.208 4.743 6.324 4.86c4.436 4.47 8.528 6.996 8.528 6.996.154.085.27.154.36.213.085-.215.16-.437.224-.668.708-2.588-.09-5.548-1.893-7.992z"/></svg><div class="jb" style="left:1059px">LandingView</div><svg class="a" style="left:1202px;top:151px" width="9" height="22" viewBox="0 0 9 22"><path d="M1.8 1.6L6.6 11L1.8 20.4" fill="none" stroke="#737373" stroke-width="2.2"/></svg><div class="a" style="left:1226px;top:146px;width:28px;height:28px;border-radius:6px;background:#c05bd6;color:#fff;font-weight:bold;font-size:22px;line-height:29px;text-align:center">S</div><div class="jb" style="left:1264.6px">LandingView</div><div id="code"><div class="a" style="left:10px;top:268px;width:10.5px;height:38px;background:#b7d0f9;border:2px solid #3b82f6;border-radius:6px"></div><div class="a" style="left:94px;top:4px;width:14px;height:225px;background:#e8e8e8;border-radius:7px 7px 7px 7px;box-shadow:0 -1.5px 0 rgba(255,255,255,.55)"></div><div class="a" style="left:94px;top:384px;width:14px;height:1700px;background:#e8e8e8;border-radius:7px 7px 0px 0px;box-shadow:0 -1.5px 0 rgba(255,255,255,.55)"></div><div class="a" style="left:94px;top:1029px;width:14px;height:1700px;background:#d2d2d2;border-radius:7px 7px 0px 0px;box-shadow:0 -1.5px 0 rgba(255,255,255,.55)"></div><div class="a" style="left:94px;top:1067px;width:14px;height:1700px;background:#c0c0c0;border-radius:7px 7px 0px 0px;box-shadow:0 -1.5px 0 rgba(255,255,255,.55)"></div><div class="a" style="left:94px;top:1143px;width:14px;height:1700px;background:#aeaeae;border-radius:7px 7px 0px 0px;box-shadow:0 -1.5px 0 rgba(255,255,255,.55)"></div><div class="a" style="left:94px;top:1219px;width:14px;height:1700px;background:#9e9e9e;border-radius:7px 7px 0px 0px;box-shadow:0 -1.5px 0 rgba(255,255,255,.55)"></div><div class="a" style="left:94px;top:1371px;width:14px;height:1700px;background:#929292;border-radius:7px 7px 0px 0px;box-shadow:0 -1.5px 0 rgba(255,255,255,.55)"></div><div class="a" style="left:94px;top:1409px;width:14px;height:1700px;background:#868686;border-radius:7px 7px 0px 0px;box-shadow:0 -1.5px 0 rgba(255,255,255,.55)"></div><div class="a" style="left:94px;top:1523px;width:14px;height:110px;background:#7a7a7a;border-radius:7px 7px 7px 7px;box-shadow:0 -1.5px 0 rgba(255,255,255,.55)"></div><div class="a" style="left:0;top:800px;width:2480px;height:38px;background:rgba(59,130,246,.095)"></div><div class="a" style="left:8px;top:762px;width:2480px;height:114px;background:rgba(59,130,246,.04);border:2px solid #3b82f4;border-radius:6px 0 0 6px"></div><div class="a" style="left:8px;top:762px;width:13.6px;height:114px;background:rgba(150,190,250,.8);border:2px solid #3b82f4;border-radius:6.5px"></div><div class="ln" style="top:3px">1</div><div class="cl" style="top:3px"><span class="c">//</span></div><div class="ln" style="top:41px">2</div><div class="cl" style="top:41px"><span class="c">//  LandingView.swift</span></div><div class="ln" style="top:79px">3</div><div class="cl" style="top:79px"><span class="c">//  TodoList</span></div><div class="ln" style="top:117px">4</div><div class="cl" style="top:117px"><span class="c">//</span></div><div class="ln" style="top:155px">5</div><div class="cl" style="top:155px"><span class="c">//  Created by Russell Gordon on 2024-04-08.</span></div><div class="ln" style="top:193px">6</div><div class="cl" style="top:193px"><span class="c">//</span></div><div class="ln" style="top:231px">7</div><div class="ln" style="top:269px">8</div><div class="cl" style="top:269px"><span class="k">import</span> SwiftData</div><div class="ln" style="top:307px">9</div><div class="cl" style="top:307px"><span class="k">import</span> SwiftUI</div><div class="ln" style="top:345px">10</div><div class="ln" style="top:383px">11</div><div class="cl" style="top:383px"><span class="k">struct</span> <span class="td">LandingView</span>: <span class="oc">View</span> {</div><div class="ln" style="top:421px">12</div><div class="ln" style="top:459px">13</div><div class="cl" style="top:459px">    <span class="c">// </span><span class="m">MARK: Stored properties</span></div><div class="ln" style="top:497px">14</div><div class="ln" style="top:535px">15</div><div class="cl" style="top:535px">    <span class="c">// The item currently being added</span></div><div class="ln" style="top:573px">16</div><div class="cl" style="top:573px">    <span class="oc">@State</span> <span class="k">var</span> <span class="od">newItemDescription</span> = <span class="s">&quot;&quot;</span></div><div class="ln" style="top:611px">17</div><div class="ln" style="top:649px">18</div><div class="cl" style="top:649px">    <span class="c">// The search text</span></div><div class="ln" style="top:687px">19</div><div class="cl" style="top:687px">    <span class="oc">@State</span> <span class="k">var</span> <span class="od">searchText</span> = <span class="s">&quot;&quot;</span></div><div class="ln" style="top:725px">20</div><div class="ln" style="top:763px">21</div><div class="cl" style="top:763px">    <span class="c">// Access the model context (required to do additions, deletions, updates, et cetera)</span></div><div class="ln" style="top:801px;color:#1c1c1c">22</div><div class="cl" style="top:801px">    <span class="oc">@Environment</span>(\.<span class="op">modelContext</span>) <span class="k">var</span> <span class="od">modelContext</span></div><div class="ln" style="top:839px">23</div><div class="ln" style="top:877px">24</div><div class="cl" style="top:877px">    <span class="c">// The list of to-do items</span></div><div class="ln" style="top:915px">25</div><div class="cl" style="top:915px">    <span class="oc">@State</span> <span class="k">var</span> <span class="od">todos</span>: [<span class="pc">TodoItem</span>] = <span class="pf">exampleItems</span></div><div class="ln" style="top:953px">26</div><div class="ln" style="top:991px">27</div><div class="cl" style="top:991px">    <span class="c">// </span><span class="m">MARK: Computed properties</span></div><div class="ln" style="top:1029px">28</div><div class="cl" style="top:1029px">    <span class="k">var</span> <span class="od">body</span>: <span class="k">some</span> <span class="oc">View</span> {</div><div class="ln" style="top:1067px">29</div><div class="cl" style="top:1067px">        <span class="oc">NavigationView</span> {</div><div class="ln" style="top:1105px">30</div><div class="ln" style="top:1143px">31</div><div class="cl" style="top:1143px">            <span class="oc">VStack</span> {</div><div class="ln" style="top:1181px">32</div><div class="ln" style="top:1219px">33</div><div class="cl" style="top:1219px">                <span class="oc">List</span>(<span class="pf">$todos</span>) { $todo <span class="k">in</span></div><div class="ln" style="top:1257px">34</div><div class="ln" style="top:1295px">35</div><div class="cl" style="top:1295px">                    <span class="pc">ItemView</span>(<span class="pf">currentItem</span>: $todo)</div><div class="ln" style="top:1333px">36</div><div class="cl" style="top:1333px">                        <span class="c">// Delete a to-do item</span></div><div class="ln" style="top:1371px">37</div><div class="cl" style="top:1371px">                        .<span class="op">swipeActions</span> {</div><div class="ln" style="top:1409px">38</div><div class="cl" style="top:1409px">                            <span class="oc">Button</span>(</div><div class="ln" style="top:1447px">39</div><div class="cl" style="top:1447px">                                <span class="s">&quot;Delete&quot;</span>,</div><div class="ln" style="top:1485px">40</div><div class="cl" style="top:1485px">                                <span class="op">role</span>: .<span class="op">destructive</span>,</div><div class="ln" style="top:1523px">41</div><div class="cl" style="top:1523px">                                <span class="op">action</span>: {</div><div class="ln" style="top:1561px">42</div><div class="cl" style="top:1561px">                                    <span class="pf">delete</span>(todo)</div><div class="ln" style="top:1599px">43</div><div class="cl" style="top:1599px">                                }</div></div><svg class="a" style="left:569px;top:1851px" width="30" height="20" viewBox="0 0 30 20"><path d="M4 0H21.5Q23.6 0 24.8 1.7L29 8Q30 10 29 12L24.8 18.3Q23.6 20 21.5 20H4Q0 20 0 16V4Q0 0 4 0Z" fill="#3478f6"/></svg><div class="t" style="left:2760px;top:1851px;font-size:23.25px;letter-spacing:.42px;-webkit-text-stroke:.25px;color:#7d7d7d">Line: 22  Col: 50</div><div class="sep" style="left:2954px;top:1849px;height:24px;background:#e0e0e0"></div><svg class="a" style="left:2972px;top:1847px" width="28" height="28" viewBox="0 0 28 28"><rect x="2.2" y="2.2" width="23.6" height="23.6" rx="4" fill="none" stroke="#7a7a7a" stroke-width="2.2"/><rect x="5.6" y="17" width="16.8" height="5.6" rx="1.6" fill="#7a7a7a"/></svg></body></html>
